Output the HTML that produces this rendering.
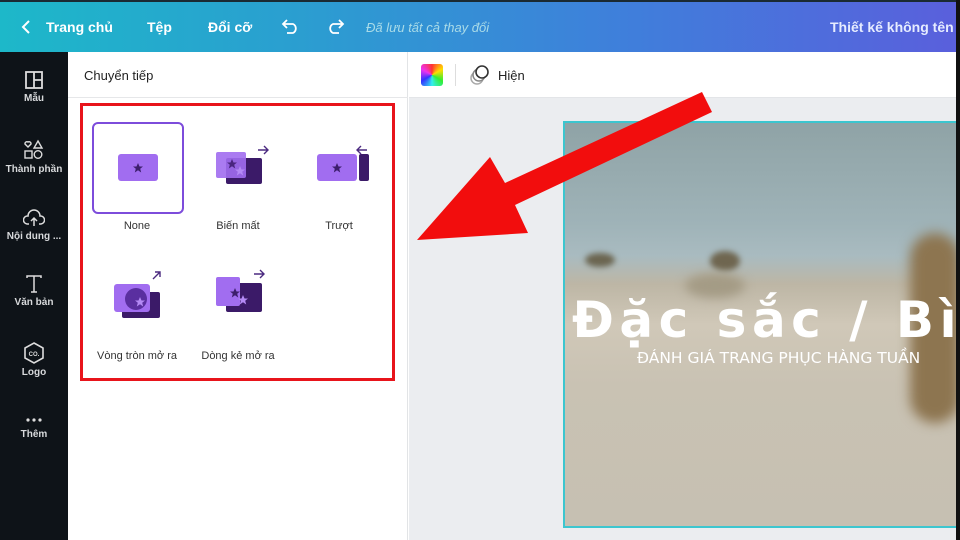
<!DOCTYPE html>
<html><head><meta charset="utf-8"><style>
*{margin:0;padding:0;box-sizing:border-box}
body{width:960px;height:540px;overflow:hidden;position:relative;font-family:"Liberation Sans",sans-serif;background:#fff}
.abs{position:absolute}
#hdr{left:0;top:0;width:960px;height:52px;background:linear-gradient(90deg,#1db8c9 0%,#2a9fd0 30%,#3f7fdb 65%,#5a5fdc 100%);border-top:2px solid #1a2a33}
.ht{color:#fff;font-size:14px;font-weight:bold;top:17px;white-space:nowrap}
#side{left:0;top:52px;width:68px;height:488px;background:#0e1318}
.si{width:68px;left:0;text-align:center;color:#d8dadc;font-size:10px;font-weight:bold;white-space:nowrap}
.si svg{display:block;margin:0 auto 3px}
.lbl{font-size:11px;color:#333;text-align:center;width:100px;white-space:nowrap}
</style></head><body>
<div id="hdr" class="abs">
 <svg class="abs" style="left:20px;top:17px" width="12" height="16"><path d="M9 2 L3 8 L9 14" stroke="#fff" stroke-width="2" fill="none"/></svg>
 <div class="abs ht" style="left:46px">Trang chủ</div>
 <div class="abs ht" style="left:147px">Tệp</div>
 <div class="abs ht" style="left:208px">Đổi cỡ</div>
 <svg class="abs" style="left:281px;top:15px" width="20" height="18"><path d="M6 3 L2 7 L6 11 M2 7 H12 A5 5 0 0 1 12 16 H6" stroke="#fff" stroke-width="1.8" fill="none"/></svg>
 <svg class="abs" style="left:325px;top:15px" width="20" height="18"><path d="M14 3 L18 7 L14 11 M18 7 H8 A5 5 0 0 0 8 16 H14" stroke="#fff" stroke-width="1.8" fill="none"/></svg>
 <div class="abs" style="left:366px;top:18px;color:#a9dbe8;font-size:13px;font-style:italic;white-space:nowrap">Đã lưu tất cả thay đổi</div>
 <div class="abs ht" style="left:830px;color:#e6ecff">Thiết kế không tên -</div>
</div>
<div class="abs" style="left:956px;top:0;width:4px;height:540px;background:#111;z-index:5"></div>
<div id="side" class="abs">
 <div class="abs si" style="top:18px"><svg width="20" height="20"><rect x="2" y="2" width="16" height="16" fill="none" stroke="#ddd" stroke-width="1.8"/><path d="M10 2V18M10 10H18" stroke="#ddd" stroke-width="1.8"/></svg>Mẫu</div>
 <div class="abs si" style="top:87px"><svg width="22" height="22"><path d="M5 8 L2 5 A2 2 0 0 1 5 3 A2 2 0 0 1 8 5Z" fill="none" stroke="#ddd" stroke-width="1.4"/><path d="M15 2 L19 9 H11Z" fill="none" stroke="#ddd" stroke-width="1.4"/><rect x="2" y="12" width="7" height="7" fill="none" stroke="#ddd" stroke-width="1.4"/><circle cx="15" cy="15.5" r="3.8" fill="none" stroke="#ddd" stroke-width="1.4"/></svg>Thành phần</div>
 <div class="abs si" style="top:156px"><svg width="22" height="20"><path d="M6 16 H4 A4 4 0 0 1 5 8 A6 6 0 0 1 17 8 A4 4 0 0 1 18 16 H16 M11 18 V10 M8 13 L11 10 L14 13" fill="none" stroke="#ddd" stroke-width="1.5"/></svg>Nội dung ...</div>
 <div class="abs si" style="top:222px"><svg width="20" height="20"><path d="M3 4 V2 H17 V4 M10 2 V18 M7 18 H13" fill="none" stroke="#ddd" stroke-width="1.5"/></svg>Văn bản</div>
 <div class="abs si" style="top:290px"><svg width="22" height="22"><path d="M11 1 L20 6 V16 L11 21 L2 16 V6Z" fill="none" stroke="#ddd" stroke-width="1.6"/><text x="11" y="14" font-size="6" fill="#ddd" text-anchor="middle" font-family="Liberation Sans" font-weight="bold">CO.</text></svg>Logo</div>
 <div class="abs si" style="top:362px"><svg width="20" height="12"><circle cx="4" cy="6" r="1.6" fill="#ddd"/><circle cx="10" cy="6" r="1.6" fill="#ddd"/><circle cx="16" cy="6" r="1.6" fill="#ddd"/></svg>Thêm</div>
</div>
<div class="abs" style="left:68px;top:52px;width:340px;height:488px;background:#fff;border-right:1px solid #e2e4e6"></div>
<div class="abs" style="left:84px;top:68px;font-size:13px;color:#222">Chuyển tiếp</div>
<div class="abs" style="left:68px;top:97px;width:340px;height:1px;background:#e6e7e9"></div>
<div class="abs" style="left:409px;top:52px;width:547px;height:46px;background:#fff;border-bottom:1px solid #e3e5e8"></div>
<div class="abs" style="left:409px;top:98px;width:547px;height:442px;background:#ebedf0"></div>
<div class="abs" style="left:421px;top:64px;width:22px;height:22px;border-radius:3px;background:conic-gradient(#f33,#fd0,#3e3,#3ee,#33f,#e3e,#f33)"></div>
<div class="abs" style="left:455px;top:64px;width:1px;height:22px;background:#ddd"></div>
<svg class="abs" style="left:468px;top:64px" width="24" height="22"><circle cx="9" cy="14" r="6" fill="none" stroke="#aaa" stroke-width="1.5"/><circle cx="11" cy="11" r="6" fill="#fff" stroke="#888" stroke-width="1.5"/><circle cx="14" cy="8" r="6" fill="#fff" stroke="#333" stroke-width="1.6"/></svg>
<div class="abs" style="left:498px;top:68px;font-size:13px;color:#222">Hiện</div>

<div class="abs" style="left:563px;top:121px;width:395px;height:407px;border:2px solid #3cc6cf;overflow:hidden;background:linear-gradient(180deg,#8fa3a6 0%,#9fb3b8 25%,#a9bbc0 33%,#bdb6a5 40%,#d0c8b8 50%,#c9c2b3 65%,#c6c0b2 100%)">
 <div class="abs" style="left:20px;top:130px;width:30px;height:14px;border-radius:50%;background:#6b6550;filter:blur(3px)"></div>
 <div class="abs" style="left:145px;top:128px;width:30px;height:20px;border-radius:50%;background:#6f6650;filter:blur(3px)"></div>
 <div class="abs" style="left:120px;top:150px;width:60px;height:25px;border-radius:50%;background:#a49b85;filter:blur(5px)"></div>
 <div class="abs" style="left:345px;top:110px;width:50px;height:190px;border-radius:25px;background:#8d7550;filter:blur(6px)"></div>
 <div class="abs" style="left:7px;top:168px;font-size:50px;font-weight:bold;color:#fff;font-family:'DejaVu Sans',sans-serif;white-space:nowrap;letter-spacing:5.5px">Đặc sắc / Bìnl</div>
 <div class="abs" style="left:72px;top:226px;font-size:15.5px;color:#fff;font-family:'DejaVu Sans',sans-serif;white-space:nowrap">ĐÁNH GIÁ TRANG PHỤC HÀNG TUẦN</div>
</div>

<div class="abs" style="left:92px;top:122px;width:92px;height:92px;border:2px solid #7d4cdb;border-radius:6px"></div>
<svg class="abs" style="left:110px;top:140px" width="300" height="190">
 <defs><path id="st" d="M0 -5 L1.5 -1.5 L5 -1.5 L2.2 0.8 L3.2 4.5 L0 2.3 L-3.2 4.5 L-2.2 0.8 L-5 -1.5 L-1.5 -1.5Z"/></defs>
 <rect x="8" y="14" width="40" height="27" rx="3" fill="#a16df0"/><use href="#st" x="28" y="28" fill="#3d1e6d"/>
 <rect x="116" y="18" width="36" height="26" rx="2" fill="#3b1a68"/><rect x="106" y="12" width="30" height="26" rx="2" fill="#a16df0" opacity=".9"/><use href="#st" x="122" y="24" fill="#4a2580"/><use href="#st" x="130" y="31" fill="#b48af5"/>
 <path d="M148 10 H158 M154 6 L158 10 L154 14" stroke="#4b2a80" stroke-width="1.4" fill="none"/>
 <rect x="207" y="14" width="40" height="27" rx="3" fill="#a16df0"/><use href="#st" x="227" y="28" fill="#3d1e6d"/><rect x="249" y="14" width="10" height="27" rx="2" fill="#3b1a68"/>
 <path d="M247 10 H257 M251 6 L247 10 L251 14" stroke="#4b2a80" stroke-width="1.4" fill="none"/>
 <g transform="translate(0,4)">
 <rect x="12" y="148" width="38" height="26" rx="2" fill="#3b1a68"/><rect x="4" y="140" width="36" height="28" rx="3" fill="#a16df0"/><circle cx="26" cy="155" r="11" fill="#5a2fa0"/><use href="#st" x="30" y="158" fill="#b48af5"/>
 <path d="M43 135 L50 128 M45 128 H50 V133" stroke="#4b2a80" stroke-width="1.4" fill="none"/>
 <rect x="116" y="139" width="36" height="29" rx="2" fill="#3b1a68"/><rect x="106" y="133" width="24" height="29" rx="2" fill="#a16df0"/><use href="#st" x="125" y="149" fill="#3d1e6d"/><use href="#st" x="133" y="156" fill="#b48af5"/>
 <path d="M144 130 H154 M150 126 L154 130 L150 134" stroke="#4b2a80" stroke-width="1.4" fill="none"/>
 </g>
</svg>
<div class="abs lbl" style="left:87px;top:220px">None</div>
<div class="abs lbl" style="left:188px;top:220px">Biến mất</div>
<div class="abs lbl" style="left:289px;top:220px">Trượt</div>
<div class="abs lbl" style="left:87px;top:350px">Vòng tròn mở ra</div>
<div class="abs lbl" style="left:188px;top:350px">Dòng kẻ mở ra</div>
<div class="abs" style="left:80px;top:103px;width:315px;height:278px;border:3px solid #e8141b"></div>

<svg class="abs" style="left:0;top:0" width="960" height="540"><polygon points="702,92 712,112 515,205 528,233 417,240 490,157 505,183" fill="#f20d0d"/></svg>
</body></html>
